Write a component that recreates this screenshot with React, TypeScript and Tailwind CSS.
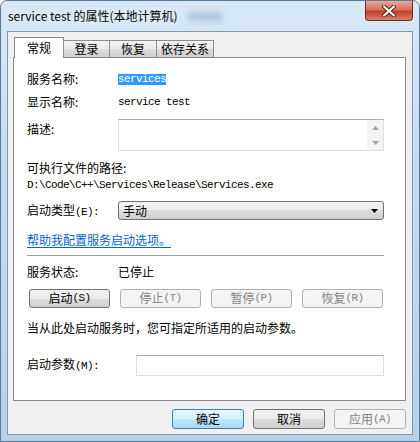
import React from 'react';

const cjk = "font-['Noto_Sans_CJK_SC',sans-serif]";

// SimSun-style narrow latin inside Chinese labels
function M({ children }: { children: React.ReactNode }) {
  return <span className="font-['Liberation_Mono',monospace] text-[11px] tracking-[-0.6px]">{children}</span>;
}

function Btn({ zh, key2, disabled, w = 'w-[81px]', h = 'h-[19px]', primary }: {
  zh: string; key2?: string; disabled?: boolean; w?: string; h?: string; primary?: boolean;
}) {
  const look = primary
    ? 'border-[#3c7fb1] bg-[linear-gradient(#eaf6fd,#d9f0fc_50%,#bee6fd_50%,#a7d9f5)] text-black'
    : disabled
    ? 'border-[#adb2b5] bg-[#f4f4f4] text-[#838383]'
    : 'border-[#707070] bg-[linear-gradient(#f2f2f2,#ebebeb_50%,#dddddd_50%,#cfcfcf)] text-black';
  return (
    <div className={`${w} ${h} ${look} border rounded-[3px] flex items-center justify-center text-[12px] leading-none`}>
      <span>{zh}</span>
      {key2 && <M>{key2}</M>}
    </div>
  );
}

function UpArrow() {
  return (
    <svg width="7" height="4" viewBox="0 0 7 4">
      <path d="M0 4 L3.5 0 L7 4 Z" fill="#a6a6a6" />
    </svg>
  );
}

function DownArrow({ color = '#a6a6a6' }: { color?: string }) {
  return (
    <svg width="7" height="4" viewBox="0 0 7 4">
      <path d="M0 0 L7 0 L3.5 4 Z" fill={color} />
    </svg>
  );
}

export default function App() {
  const tabs = [
    { name: '常规', w: 'w-[50px]', active: true },
    { name: '登录', w: 'w-[47px]' },
    { name: '恢复', w: 'w-[48px]' },
    { name: '依存关系', w: 'w-[58px]' },
  ];

  return (
    <div className={`${cjk} w-[420px] h-[442px] flex flex-col border border-[#5b7a99] rounded-t-[7px] bg-[linear-gradient(180deg,#d9e8f6,#c6dbef_40%,#b8d0e8)] overflow-hidden`}>
      {/* Title bar */}
      <div className="h-[30px] flex items-start">
        <div className="h-[30px] flex items-center pl-[7px] flex-1">
          <span className="text-[12px] text-black [text-shadow:0_0_6px_#ffffff]">service test 的属性(本地计算机)</span>
          <span className="ml-[10px] w-[34px] h-[9px] bg-[#9ab7d6] blur-[3px] opacity-70" />
        </div>
        <div className="mr-[6px] w-[48px] h-[20px] rounded-b-[4px] border border-t-0 border-[#6b2b22] bg-[linear-gradient(#e9a99c,#d7705d_45%,#c1412a_55%,#d7806a)] flex items-center justify-center">
          <svg width="16" height="12" viewBox="0 0 16 12">
            <path d="M3 1.5 L13 10.5 M13 1.5 L3 10.5" stroke="#4a1d18" strokeWidth="4" strokeLinecap="round" />
            <path d="M3 1.5 L13 10.5 M13 1.5 L3 10.5" stroke="#ffffff" strokeWidth="2.2" strokeLinecap="round" />
          </svg>
        </div>
      </div>

      {/* Client area */}
      <div className="mx-[6px] mb-[6px] flex-1 border border-[#8297ad] bg-[#f0f0f0] flex flex-col pt-[5px] pl-[5px] pr-[6px]">
        {/* Tabs */}
        <div className="h-[20px] flex items-end pl-[1px]">
          {tabs.map((t) =>
            t.active ? (
              <div key={t.name} className={`${t.w} h-[21px] -mb-[1px] relative z-10 bg-white border border-b-0 border-[#898c95] flex items-center justify-center text-[12px] text-black`}>
                {t.name}
              </div>
            ) : (
              <div key={t.name} className={`${t.w} h-[17px] -ml-px bg-[linear-gradient(#f3f3f3,#ebebeb_50%,#dddddd_50%,#cfcfcf)] border border-b-0 border-[#898c95] flex items-center justify-center text-[12px] text-black`}>
                {t.name}
              </div>
            )
          )}
        </div>

        {/* Tab panel */}
        <div className="h-[344px] border border-[#898c95] bg-white pl-[13px] pr-[19px] text-[12px] text-black">
          <div className="mt-[13px] h-[16px] flex items-center">
            <span className="w-[91px]">服务名称:</span>
            <span className="bg-[#3399ff] text-white h-[11px] leading-[11px] inline-flex items-center">
              <M>services</M>
            </span>
          </div>

          <div className="mt-[7px] h-[16px] flex items-center">
            <span className="w-[91px]">显示名称:</span>
            <M>service test</M>
          </div>

          <div className="mt-[9px] flex items-start">
            <span className="w-[91px] pt-[2px] leading-[16px]">描述:</span>
            <div className="w-[266px] h-[32px] border border-[#dbdfe6] border-t-[#abadb3] bg-white flex justify-end">
              <div className="w-[16px] h-full bg-[#f4f4f4] flex flex-col">
                <div className="flex-1 flex items-center justify-center"><UpArrow /></div>
                <div className="flex-1 flex items-center justify-center"><DownArrow /></div>
              </div>
            </div>
          </div>

          <div className="mt-[9px] h-[16px] flex items-center">可执行文件的路径:</div>
          <div className="mt-[1px] h-[16px] flex items-center">
            <M>D:\Code\C++\Services\Release\Services.exe</M>
          </div>

          <div className="mt-[8px] flex items-center">
            <span className="w-[91px]">启动类型<M>(E):</M></span>
            <div className="w-[266px] h-[19px] border border-[#707070] rounded-[3px] bg-[linear-gradient(#f2f2f2,#ebebeb_50%,#dddddd_50%,#cfcfcf)] flex items-center justify-between pl-[4px] pr-[5px]">
              <span>手动</span>
              <DownArrow color="#000000" />
            </div>
          </div>

          <div className="mt-[11px] h-[16px] flex items-center">
            <span className="text-[#0066cc] underline underline-offset-2">帮助我配置服务启动选项。</span>
          </div>

          <div className="mt-[7px] mr-[2px] h-px bg-[#a0a0a0]" />

          <div className="mt-[8px] h-[16px] flex items-center">
            <span className="w-[91px]">服务状态:</span>
            <span>已停止</span>
          </div>

          <div className="mt-[9px] flex gap-[10px] pl-[2px]">
            <Btn zh="启动" key2="(S)" />
            <Btn zh="停止" key2="(T)" disabled />
            <Btn zh="暂停" key2="(P)" disabled />
            <Btn zh="恢复" key2="(R)" disabled />
          </div>

          <div className="mt-[12px] h-[16px] flex items-center">当从此处启动服务时，您可指定所适用的启动参数。</div>

          <div className="mt-[19px] flex items-center">
            <span className="w-[109px]">启动参数<M>(M):</M></span>
            <div className="w-[248px] h-[21px] border border-[#dbdfe6] border-t-[#abadb3] bg-white" />
          </div>
        </div>

        {/* Dialog buttons */}
        <div className="mt-[8px] flex justify-end gap-[9px]">
          <Btn zh="确定" primary w="w-[72px]" h="h-[20px]" />
          <Btn zh="取消" w="w-[72px]" h="h-[20px]" />
          <Btn zh="应用" key2="(A)" disabled w="w-[72px]" h="h-[20px]" />
        </div>
      </div>
    </div>
  );
}
